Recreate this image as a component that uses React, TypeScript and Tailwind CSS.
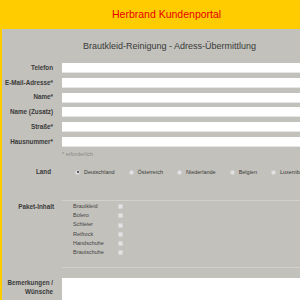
import React from "react";

const font = { fontFamily: '"Liberation Sans", Arial, sans-serif' };

function Row({ label }: { label: string }) {
  return (
    <div className="flex items-center h-[10px]">
      <div className="w-[51px] shrink-0 text-right text-[6.3px] font-bold text-[#3a3a3a] leading-none whitespace-nowrap">{label}</div>
      <div className="ml-[9px] flex-1 h-[10px] bg-white border-b border-[#e6e6e6]" />
    </div>
  );
}

function Radio({ label, checked }: { label: string; checked?: boolean }) {
  return (
    <div className="flex items-center gap-[4px] shrink-0">
      <div className="w-[5px] h-[5px] shrink-0 rounded-full bg-[#e4e4e4] border border-[#d2d2d2] flex items-center justify-center">
        {checked && <div className="w-[2px] h-[2px] rounded-full bg-[#333]" />}
      </div>
      <span className="text-[5.5px] text-[#3a3a3a] leading-none whitespace-nowrap">{label}</span>
    </div>
  );
}

function Item({ label }: { label: string }) {
  return (
    <div className="flex items-center h-[9.2px]">
      <span className="w-[45px] shrink-0 text-[5.5px] text-[#444] leading-none whitespace-nowrap">{label}</span>
      <div className="w-[5px] h-[5px] shrink-0 bg-[#e2e2e2] border border-[#d4d4d4] rounded-[1px]" />
    </div>
  );
}

export default function App() {
  return (
    <div className="w-[300px] h-[300px] overflow-hidden bg-[#ffcc00] flex flex-col" style={font}>
      <div className="h-[29px] shrink-0 flex items-center pl-[112px] text-[10.5px] text-[#e60000] whitespace-nowrap">
        Herbrand Kundenportal
      </div>
      <div className="ml-[2px] flex-1 bg-[#c2c1bb] flex flex-col overflow-hidden">
        <div className="mt-[11px] pl-[81px] text-[9px] leading-[12px] text-[#3a3a3a] whitespace-nowrap">
          Brautkleid-Reinigung - Adress-Übermittlung
        </div>
        <div className="mt-[11px] flex flex-col gap-[4.8px]">
          <Row label="Telefon" />
          <Row label="E-Mail-Adresse*" />
          <Row label="Name*" />
          <Row label="Name (Zusatz)" />
          <Row label="Straße*" />
          <Row label="Hausnummer*" />
        </div>
        <div className="mt-[3.5px] pl-[60px] text-[5.5px] leading-[8px] text-[#8a8a8a]">* erforderlich</div>
        <div className="mt-[9px] flex items-center h-[10px]">
          <div className="w-[49px] shrink-0 text-right text-[6.3px] font-bold text-[#3a3a3a] leading-none">Land</div>
          <div className="ml-[24px] flex items-center gap-[14px]">
            <Radio label="Deutschland" checked />
            <Radio label="Österreich" />
            <Radio label="Niederlande" />
            <Radio label="Belgien" />
            <Radio label="Luxembourg" />
          </div>
        </div>
        <div className="mt-[23px] ml-[60px] h-[1px] bg-[#d2d1cc]" />
        <div className="mt-[0.7px] flex">
          <div className="w-[52px] shrink-0 h-[9.2px] flex items-center justify-end text-[6.3px] font-bold text-[#3a3a3a] leading-none">Paket-Inhalt</div>
          <div className="ml-[19px] flex flex-col">
            <Item label="Brautkleid" />
            <Item label="Bolero" />
            <Item label="Schleier" />
            <Item label="Reifrock" />
            <Item label="Handschuhe" />
            <Item label="Brautschuhe" />
          </div>
        </div>
        <div className="mt-[10px] ml-[60px] h-[1px] bg-[#d2d1cc]" />
        <div className="mt-[10px] flex flex-1">
          <div className="w-[51px] shrink-0 pt-[1px] text-right text-[6.3px] font-bold text-[#3a3a3a] leading-[8.5px]">
            Bemerkungen /<br />Wünsche
          </div>
          <div className="ml-[9px] flex-1 bg-white" />
        </div>
      </div>
    </div>
  );
}
